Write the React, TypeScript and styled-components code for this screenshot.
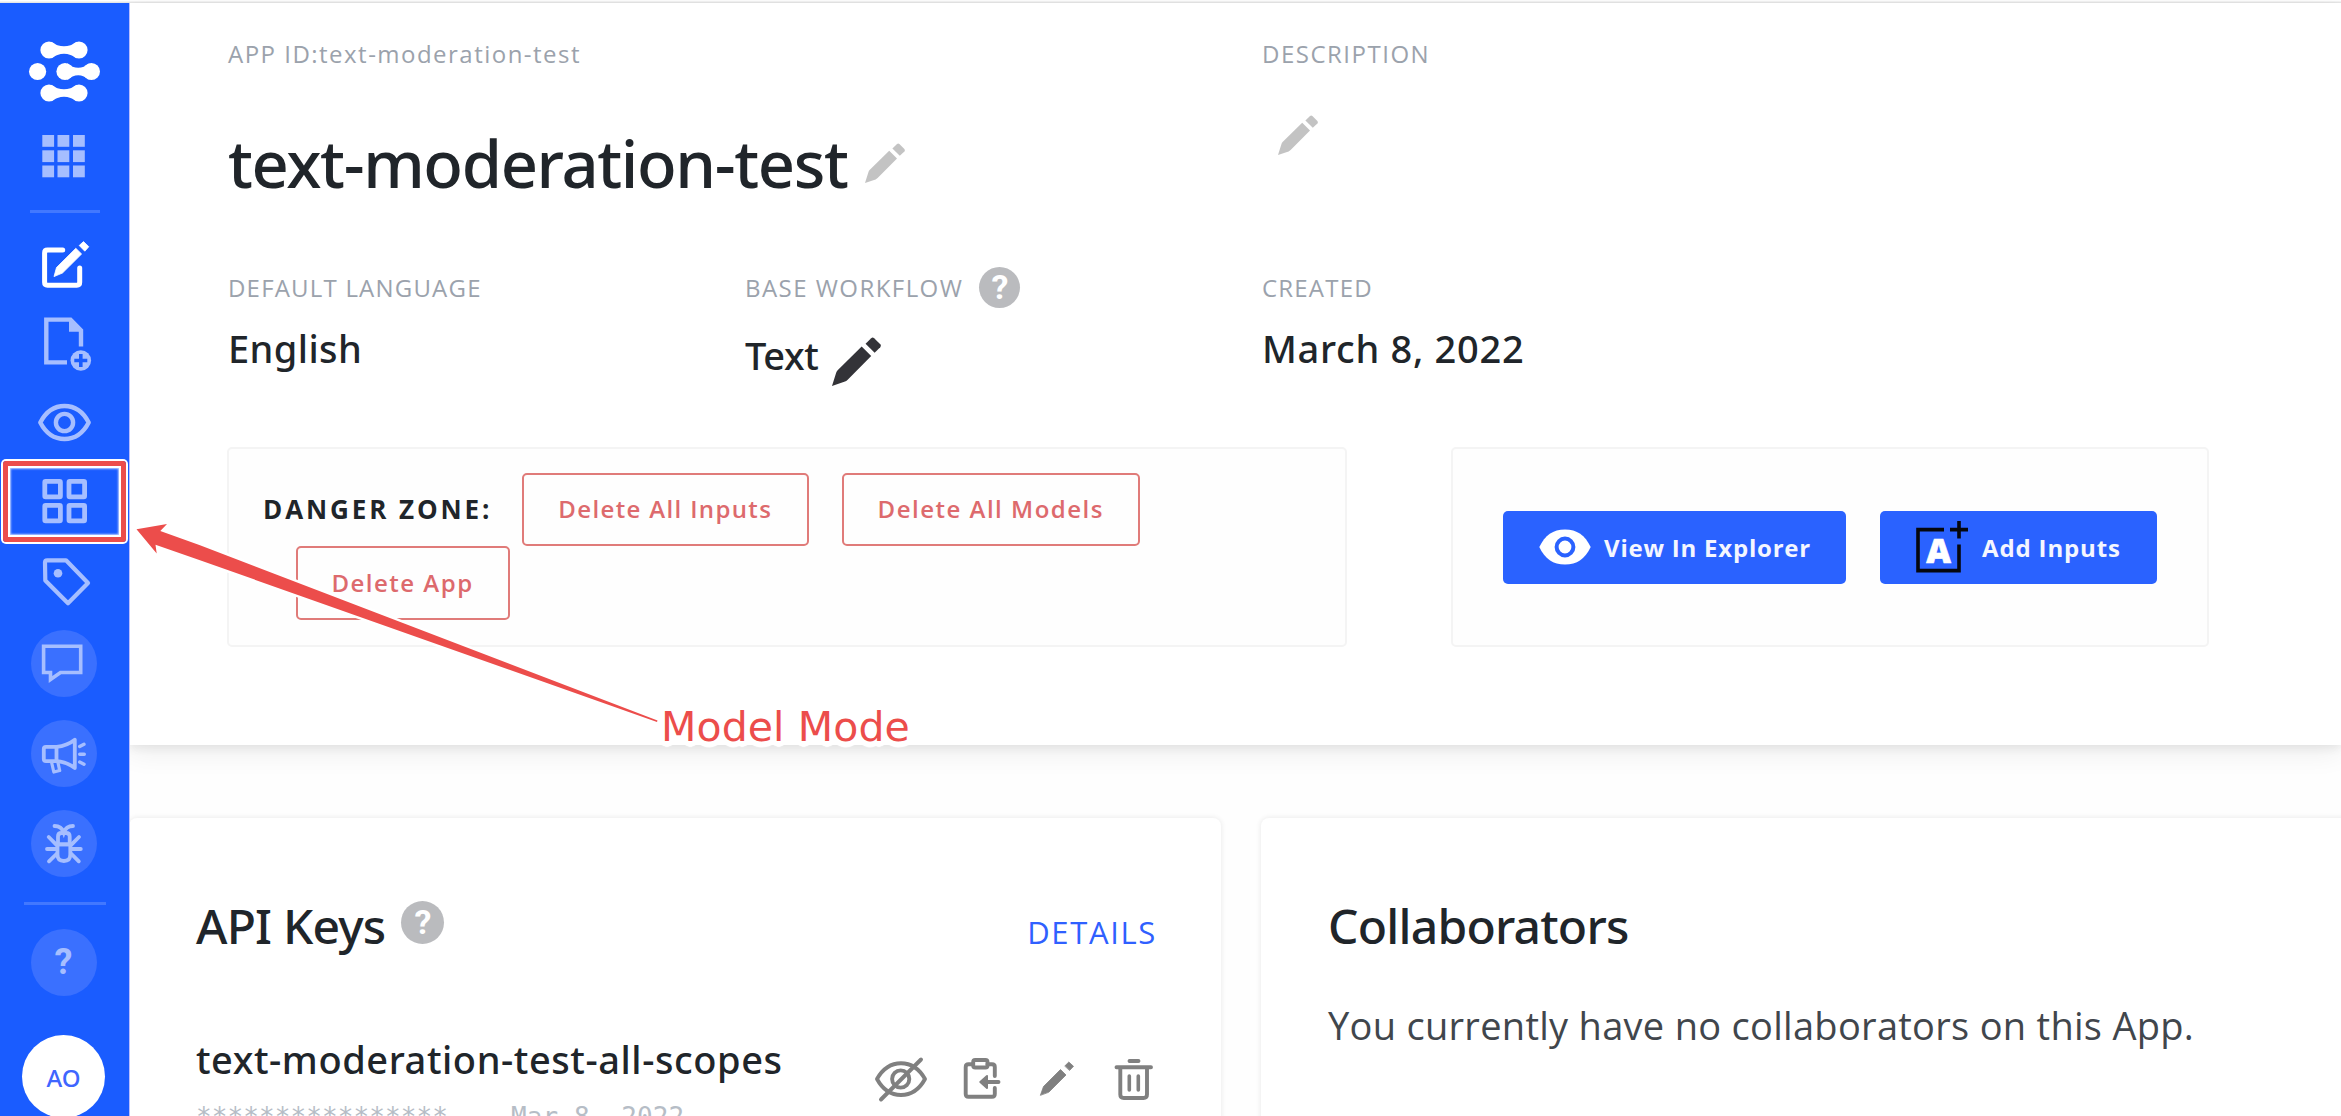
import React from "react";
import styled, { createGlobalStyle } from "styled-components";

const sans = `"Open Sans", "Noto Sans", sans-serif`;
const medium = `"Noto Sans", "Open Sans", sans-serif`;
const RED = "#ec4d4b";
const PALE = "#a6beff";

const GlobalStyle = createGlobalStyle`
  * { box-sizing: border-box; }
  html, body { margin: 0; padding: 0; background: #fefefe; overflow: hidden; }
  body { font-family: ${sans}; color: #20252a; }
  svg { display: block; flex: none; overflow: visible; }
`;

const Page = styled.div`
  position: relative;
  display: flex;
  flex-direction: column;
  width: 2341px;
  height: 1116px;
  overflow: hidden;
`;

const TopLine = styled.div`
  flex: none;
  height: 3px;
  margin-top: 1px;
  background: #e6e6e6;
  border-top: 1px solid #f3f3f3;
`;

const Body = styled.div`
  display: flex;
  flex: none;
  height: 1113px;
  margin-top: -1px;
`;

/* ---------- sidebar ---------- */

const Sidebar = styled.nav`
  position: relative;
  z-index: 3;
  flex: none;
  display: flex;
  flex-direction: column;
  align-items: center;
  width: 129px;
  height: 1113px;
  background: #1a5cff;
  box-shadow: 1px 0 0 #b9bdff;
  overflow: visible;
`;

const NavItem = styled.a<{ $gap: number }>`
  flex: none;
  display: block;
  margin-top: ${(p) => p.$gap}px;
`;

const Divider = styled.hr<{ $gap: number; $width: number }>`
  flex: none;
  width: ${(p) => p.$width}px;
  height: 3px;
  margin: ${(p) => p.$gap}px 0 0;
  border: 0;
  background: #4278ff;
`;

const Selected = styled.a`
  flex: none;
  display: flex;
  align-items: center;
  justify-content: center;
  width: 123px;
  height: 81px;
  margin-top: 17px;
  border: 5px solid ${RED};
  border-radius: 3px;
  box-shadow: 0 0 0 2px #fff, inset 0 0 0 2px #fff, inset 0 0 2px 3px rgba(255, 255, 255, 0.7);
`;

const Round = styled.a<{ $gap: number }>`
  flex: none;
  display: flex;
  align-items: center;
  justify-content: center;
  width: 66px;
  height: 67px;
  margin: ${(p) => p.$gap}px 2px 0 0;
  border-radius: 50%;
  background: #3a70ff;
  color: ${PALE};
  font: 700 36px/67px Roboto, ${sans};
`;

const Avatar = styled.a`
  flex: none;
  width: 83px;
  height: 83px;
  margin: 39px 2px 0 0;
  border-radius: 50%;
  background: #fff;
  color: #3f66ff;
  text-align: center;
  font: 500 24px/85px ${medium};
`;

function NavIcon({ y, h, children }: { y: number; h: number; children: React.ReactNode }) {
  return (
    <svg width="81" height={h} viewBox={`24 ${y} 81 ${h}`} fill="none" stroke={PALE} strokeWidth="4">
      {children}
    </svg>
  );
}

function Bone({ x1, x2, y }: { x1: number; x2: number; y: number }) {
  const m = (x1 + x2) / 2;
  return (
    <g>
      <circle cx={x1} cy={y} r="8.6" />
      <circle cx={x2} cy={y} r="8.6" />
      <path
        d={`M${x1 + 2} ${y - 8.3} Q${m} ${y + 1} ${x2 - 2} ${y - 8.3} V${y + 8.3} Q${m} ${y - 1} ${x1 + 2} ${y + 8.3} Z`}
      />
    </g>
  );
}

function SideNav() {
  return (
    <Sidebar>
      <NavItem $gap={37}>
        <NavIcon y={40} h={63}>
          <g fill="#fff" stroke="none">
            <Bone x1={49} x2={79} y={50} />
            <circle cx="37.6" cy="71.5" r="8.6" />
            <Bone x1={65} x2={91.4} y={71.5} />
            <Bone x1={49} x2={79} y={93} />
          </g>
        </NavIcon>
      </NavItem>
      <NavItem $gap={31}>
        <NavIcon y={134} h={44}>
          <g fill={PALE} stroke="none">
            {[135, 150.3, 165.5].map((y) =>
              [42.3, 57.5, 73].map((x) => <rect key={`${x}-${y}`} x={x} y={y} width="11.8" height="11.8" />)
            )}
          </g>
        </NavIcon>
      </NavItem>
      <Divider $gap={32} $width={70} />
      <NavItem $gap={27}>
        <NavIcon y={240} h={49}>
          <path
            d="M62.7 250.1 H47.5 Q44.6 250.1 44.6 253 V282.3 Q44.6 285.2 47.5 285.2 H76.8 Q79.7 285.2 79.7 282.3 V268"
            stroke="#fff"
            strokeWidth="5"
            strokeLinecap="round"
          />
          <path d="M54 276.6 L56.5 267.5 L75.8 248.3 L81.6 254 L62.5 273 Z" fill="#fff" stroke="#fff" strokeWidth="0.8" strokeLinejoin="round" />
          <path d="M79.2 245.5 L83.5 241.6 L88.8 246.7 L84.8 251.2 Z" fill="#fff" stroke="#fff" strokeWidth="0.8" strokeLinejoin="round" />
        </NavIcon>
      </NavItem>
      <NavItem $gap={26}>
        <NavIcon y={315} h={57}>
          <path d="M67 362.4 H46.3 V319.6 H70.5 L81 330.5 V346.5" strokeWidth="4.4" />
          <path d="M69 318 V331.7 H83 Z" fill={PALE} stroke="none" />
          <circle cx="80.8" cy="360.5" r="10.3" fill={PALE} stroke="none" />
          <path d="M80.8 354 V367 M74.3 360.5 H87.3" stroke="#1a5cff" strokeWidth="3.6" />
        </NavIcon>
      </NavItem>
      <NavItem $gap={30}>
        <NavIcon y={402} h={42}>
          <path
            d="M40.3 422.5 C46 411.5 54 406 64.5 406 S83 411.5 88.7 422.5 C83 433.5 75 439 64.5 439 S46 433.5 40.3 422.5 Z"
            strokeWidth="4.4"
            strokeLinejoin="round"
          />
          <circle cx="64.5" cy="422.5" r="8.6" strokeWidth="4.4" />
        </NavIcon>
      </NavItem>
      <Selected>
        <NavIcon y={479} h={44.5}>
          <g strokeWidth="4.8">
            {[481.4, 505.4].map((y) =>
              [44.8, 69].map((x) => <rect key={`${x}-${y}`} x={x} y={y} width="15.6" height="15.4" rx="0.8" />)
            )}
          </g>
        </NavIcon>
      </Selected>
      <NavItem $gap={14}>
        <NavIcon y={556} h={52}>
          <path d="M45 562.5 Q45 560.3 47.2 560.3 H66 L88 583 L68 603.3 L45.3 580.5 Z" strokeWidth="4.2" strokeLinejoin="round" />
          <circle cx="58" cy="573.3" r="4.3" fill={PALE} stroke="none" />
        </NavIcon>
      </NavItem>
      <Round $gap={22}>
        <svg width="66" height="67" viewBox="31 630 66 67" fill="none" stroke={PALE} strokeWidth="3.6">
          <path d="M43.6 646.3 H80.7 V672.5 H60.5 L50.5 679.5 V672.5 H43.6 Z" />
        </svg>
      </Round>
      <Round $gap={23}>
        <svg width="66" height="67" viewBox="31 720 66 67" fill="none" stroke={PALE} strokeWidth="3.8" strokeLinejoin="round" strokeLinecap="round">
          <path d="M56.5 746.8 H46 Q43.8 746.8 43.8 749 V759 Q43.8 761.2 46 761.2 H56.5 Z" />
          <path d="M56.5 746.8 Q67 746 74.8 739.8 V768 Q67 762 56.5 761.2" />
          <path d="M51.5 762 L53.8 772 L59.7 770.5 L57.8 762" strokeWidth="3.2" />
          <path d="M79.7 746.5 L84 744.3 M79.7 754.3 H84.3 M79.7 762 L84 764.3" strokeWidth="3.4" />
        </svg>
      </Round>
      <Round $gap={23}>
        <svg width="66" height="67" viewBox="31 810 66 67" fill="none" stroke={PALE} strokeWidth="3.8" strokeLinecap="round">
          <path d="M54.5 826 Q61.5 826 63.8 832.5 Q66 826 73 826" />
          <path d="M58 844.3 V836.5 Q58 833 61.5 833 H66 Q69.7 833 69.7 836.5 V844.3 Z" />
          <path d="M57.5 844.3 H70.3 V854.5 Q70.3 861 63.9 861 T57.5 854.5 Z" />
          <path d="M48.7 837 L56.5 844.8 M79 837 L71.2 844.8 M47 849 H56 M72 849 H80.8 M49 861.3 L57 853.5 M78.8 861.3 L71 853.5" />
        </svg>
      </Round>
      <Divider $gap={25} $width={82} />
      <Round $gap={24}>?</Round>
      <Avatar>AO</Avatar>
    </Sidebar>
  );
}

/* ---------- shared pieces ---------- */

const HelpDot = styled.span<{ $size: number }>`
  flex: none;
  width: ${(p) => p.$size}px;
  height: ${(p) => p.$size}px;
  border-radius: 50%;
  background: #babbbe;
  color: #fff;
  text-align: center;
  letter-spacing: 0;
  font: 700 34px/${(p) => p.$size}px Roboto, ${sans};
`;

function Pencil({ size, color }: { size: number; color: string }) {
  return (
    <svg width={size} height={size} viewBox="0 0 40 40" fill={color}>
      <path d="M0 40 L3.4 29.2 Q3.7 28 4.6 27.1 L24.2 7.8 L32 15.6 L12.6 35 Q11.6 36 10.6 36.4 Z" />
      <path d="M27.4 5.6 L32 1 Q33.2 0 34.4 1 L39.4 5.9 Q40.5 7.2 39.4 8.4 L34.8 12.8 Z" />
    </svg>
  );
}

/* ---------- header panel ---------- */

const Main = styled.main`
  flex: 1;
  min-width: 0;
`;

const Header = styled.section`
  position: relative;
  z-index: 1;
  height: 742px;
  padding: 34px 0 0 99px;
  background: #fff;
  box-shadow: 0 4px 8px rgba(0, 0, 0, 0.06), 0 8px 26px rgba(0, 0, 0, 0.07);
`;

const Row = styled.div<{ $columns: string; $height: number }>`
  display: grid;
  grid-template-columns: ${(p) => p.$columns};
  height: ${(p) => p.$height}px;
`;

const Label = styled.div<{ $height?: number; $track?: number }>`
  display: flex;
  align-items: center;
  gap: 16px;
  height: ${(p) => p.$height ?? 32}px;
  color: #9ba2ac;
  font-size: 24px;
  letter-spacing: ${(p) => p.$track ?? 1.4}px;
  white-space: nowrap;
`;

const TitleLine = styled.div`
  display: flex;
  align-items: center;
  gap: 17px;
  height: 80px;
  margin-top: 54px;
`;

const Title = styled.h1`
  margin: 0;
  font-family: ${medium};
  font-size: 65px;
  line-height: 80px;
  font-weight: 500;
  letter-spacing: -1.36px;
  white-space: nowrap;
`;

const DescriptionEdit = styled.div`
  margin: 46px 0 0 16px;
`;

const Value = styled.div<{ $gap?: number; $track: number }>`
  display: flex;
  margin-top: ${(p) => p.$gap ?? 15}px;
  font-family: ${medium};
  font-size: 38px;
  line-height: 50px;
  font-weight: 500;
  letter-spacing: ${(p) => p.$track}px;
  white-space: nowrap;
`;

const ValueEdit = styled.span`
  margin: 7px 0 0 14px;
`;

const Boxes = styled.div`
  display: flex;
  gap: 104px;
  margin-left: -1px;
`;

const Box = styled.div<{ $width: number }>`
  flex: none;
  display: flex;
  flex-wrap: wrap;
  width: ${(p) => p.$width}px;
  height: 200px;
  border: 2px solid #f4f4f4;
  border-radius: 5px;
  background: #fefefe;
`;

const DangerBox = styled(Box)`
  align-content: flex-start;
  padding: 23.5px 0 0 33px;
`;

const ActionBox = styled(Box)`
  align-items: center;
  gap: 34px;
  padding-left: 50px;
`;

const DangerLabel = styled.div`
  width: 226.5px;
  line-height: 73px;
  text-indent: 1px;
  font-size: 26px;
  font-weight: 700;
  letter-spacing: 2.9px;
  white-space: nowrap;
`;

const DangerButton = styled.button<{ $width: number; $track: number }>`
  width: ${(p) => p.$width}px;
  height: 73.5px;
  margin: 0 0 0 33.5px;
  padding: 0;
  border: 2px solid #e07b79;
  border-radius: 5px;
  background: transparent;
  color: #dd6a6d;
  font: 600 24px/64px ${sans};
  letter-spacing: ${(p) => p.$track}px;
  white-space: nowrap;
`;

const PrimaryButton = styled.button<{ $width: number; $gap: number; $track: number }>`
  display: flex;
  align-items: center;
  gap: ${(p) => p.$gap}px;
  width: ${(p) => p.$width}px;
  height: 73px;
  padding: 0 0 0 36px;
  border: 0;
  border-radius: 5px;
  background: #2a62ff;
  color: #f4f6ff;
  font: 700 24px/73px ${sans};
  letter-spacing: ${(p) => p.$track}px;
  white-space: nowrap;
`;

function AppHeader() {
  return (
    <Header>
      <Row $columns="1034px 1fr" $height={230}>
        <div>
          <Label $track={1.48}>APP ID:text-moderation-test</Label>
          <TitleLine>
            <Title>text-moderation-test</Title>
            <Pencil size={40} color="#c3c3c3" />
          </TitleLine>
        </div>
        <div>
          <Label $track={1.5}>DESCRIPTION</Label>
          <DescriptionEdit>
            <Pencil size={40} color="#c3c3c3" />
          </DescriptionEdit>
        </div>
      </Row>
      <Row $columns="517px 517px 1fr" $height={180}>
        <div>
          <Label $height={41} $track={1.2}>DEFAULT LANGUAGE</Label>
          <Value $track={0.41}>English</Value>
        </div>
        <div>
          <Label $height={41} $track={1.45}>
            BASE WORKFLOW
            <HelpDot $size={41}>?</HelpDot>
          </Label>
          <Value $gap={22} $track={-0.4}>
            Text
            <ValueEdit>
              <Pencil size={49} color="#333338" />
            </ValueEdit>
          </Value>
        </div>
        <div>
          <Label $height={41} $track={1.2}>CREATED</Label>
          <Value $track={0.7}>March 8, 2022</Value>
        </div>
      </Row>
      <Boxes>
        <DangerBox $width={1120}>
          <DangerLabel>DANGER ZONE:</DangerLabel>
          <DangerButton $width={286.5} $track={1.35}>Delete All Inputs</DangerButton>
          <DangerButton $width={297.5} $track={1.5}>Delete All Models</DangerButton>
          <DangerButton $width={214} $track={1.5}>Delete App</DangerButton>
        </DangerBox>
        <ActionBox $width={758}>
          <PrimaryButton $width={343} $gap={13} $track={0.78}>
            <svg width="52" height="36" viewBox="0 0 52 36">
              <path d="M0.3 18 C6 6 14 0.4 26 0.4 S46 6 51.7 18 C46 30 38 35.6 26 35.6 S6 30 0.3 18 Z" fill="#fff" />
              <circle cx="26" cy="18" r="8.4" fill="none" stroke="#2a62ff" strokeWidth="4" />
            </svg>
            View In Explorer
          </PrimaryButton>
          <PrimaryButton $width={277} $gap={14} $track={0.86}>
            <svg width="52" height="52" viewBox="0 0 52 52" fill="none" stroke="#05070d" strokeWidth="3.6">
              <path d="M28 8.6 H2 V49.6 H43 V23.5 M43 0 V17.5 M34 8.6 H52" />
              <text x="22.5" y="41.5" textAnchor="middle" fontFamily={sans} fontSize="34" fontWeight="800" fill="#fff" stroke="#fff" strokeWidth="0.6" letterSpacing="0">
                A
              </text>
            </svg>
            Add Inputs
          </PrimaryButton>
        </ActionBox>
      </Boxes>
    </Header>
  );
}

/* ---------- cards ---------- */

const Cards = styled.div`
  display: flex;
  gap: 40px;
  margin-top: 73px;
`;

const Card = styled.section`
  flex: none;
  width: 1092px;
  height: 420px;
  padding: 78px 67px 0;
  border-radius: 8px;
  background: #fff;
  box-shadow: 0 0 5px 1px rgba(0, 0, 0, 0.07);
`;

const CardHead = styled.div`
  display: flex;
  align-items: flex-start;
  height: 60px;
`;

const CardTitle = styled.h2<{ $track: number }>`
  margin: 0;
  font-family: ${medium};
  font-size: 48px;
  line-height: 60px;
  font-weight: 500;
  letter-spacing: ${(p) => p.$track}px;
  white-space: nowrap;
`;

const CardHelp = styled.div`
  display: flex;
  margin: 5px 0 0 16px;
`;

const DetailsLink = styled.a`
  margin: 0 -3px 0 auto;
  color: #2f60ff;
  font-size: 31px;
  line-height: 73px;
  letter-spacing: 1.65px;
`;

const KeyRow = styled.div`
  display: flex;
  justify-content: space-between;
  margin-top: 78px;
`;

const KeyName = styled.div`
  font-family: ${medium};
  font-size: 38px;
  line-height: 50px;
  font-weight: 500;
  letter-spacing: 0.57px;
  white-space: nowrap;
`;

const KeyMeta = styled.div`
  margin-top: 15px;
  color: #b6bdc6;
  font: 400 26px/36px "DejaVu Sans Mono", monospace;
  letter-spacing: 0.1px;
  white-space: pre;
`;

const KeyActions = styled.div`
  display: flex;
  align-items: flex-start;
  margin: 23px 1px 0 0;
`;

const KeyAction = styled.a<{ $gap?: number }>`
  margin-left: ${(p) => p.$gap ?? 0}px;
`;

const Note = styled.p`
  margin: 44px 0 0;
  color: #41464c;
  font-size: 38px;
  line-height: 50px;
  letter-spacing: 0.29px;
  white-space: nowrap;
`;

function ActionIcon({ x, w, children }: { x: number; w: number; children: React.ReactNode }) {
  return (
    <svg width={w} height="46" viewBox={`${x} 1057 ${w} 46`} fill="none" stroke="#808080" strokeWidth="3.9" strokeLinecap="round" strokeLinejoin="round">
      {children}
    </svg>
  );
}

function CardArea() {
  return (
    <Cards>
      <Card>
        <CardHead>
          <CardTitle $track={-0.8}>API Keys</CardTitle>
          <CardHelp>
            <HelpDot $size={43}>?</HelpDot>
          </CardHelp>
          <DetailsLink>DETAILS</DetailsLink>
        </CardHead>
        <KeyRow>
          <div>
            <KeyName>text-moderation-test-all-scopes</KeyName>
            <KeyMeta>{"****************    Mar 8, 2022"}</KeyMeta>
          </div>
          <KeyActions>
            <KeyAction>
              <ActionIcon x={875} w={52}>
                <path d="M877 1079 C883 1068.5 891 1063.3 901 1063.3 S919 1068.5 925 1079 C919 1090 911 1095 901 1095 S883 1090 877 1079 Z" />
                <circle cx="900.7" cy="1079" r="8.6" />
                <path d="M881 1099.5 L921 1059.5" />
              </ActionIcon>
            </KeyAction>
            <KeyAction $gap={37}>
              <ActionIcon x={964} w={36}>
                <path d="M973 1064.3 H968.5 Q965.7 1064.3 965.7 1067 V1094 Q965.7 1096.8 968.5 1096.8 H992 Q994.8 1096.8 994.8 1094 V1088 M987.5 1064.3 H992 Q994.8 1064.3 994.8 1067 V1076" />
                <rect x="973.2" y="1060" width="14.3" height="7.5" rx="2" />
                <path d="M986 1082 H998.5" />
                <path d="M980.3 1082 L987 1076 V1088 Z" fill="#808080" strokeWidth="2" />
              </ActionIcon>
            </KeyAction>
            <KeyAction $gap={40}>
              <ActionIcon x={1040} w={34}>
                <g fill="#808080" strokeWidth="0.8">
                  <path d="M1040.5 1095 L1043.5 1086.5 L1060.5 1069.5 L1066 1075 L1049 1092 Z" />
                  <path d="M1065 1065.8 L1068.8 1062 L1073.5 1066.3 L1069.8 1070.2 Z" />
                </g>
              </ActionIcon>
            </KeyAction>
            <KeyAction $gap={40}>
              <ActionIcon x={1114} w={39}>
                <path d="M1116.5 1067.3 H1151 M1129.5 1061 H1138.5" />
                <path d="M1120.3 1068 V1094.5 Q1120.3 1098 1123.8 1098 H1143.5 Q1147 1098 1147 1094.5 V1068" />
                <path d="M1129.3 1076 V1090 M1138.3 1076 V1090" strokeWidth="3.6" />
              </ActionIcon>
            </KeyAction>
          </KeyActions>
        </KeyRow>
      </Card>
      <Card>
        <CardHead>
          <CardTitle $track={-0.76}>Collaborators</CardTitle>
        </CardHead>
        <Note>You currently have no collaborators on this App.</Note>
      </Card>
    </Cards>
  );
}

/* ---------- callout drawn over the page ---------- */

const Arrow = styled.svg`
  position: absolute;
  z-index: 4;
  left: 0;
  top: 0;
  pointer-events: none;
`;

const halo = Array.from({ length: 24 }, (_, i) => {
  const a = (i / 24) * Math.PI * 2;
  return `${(Math.cos(a) * 5).toFixed(1)}px ${(Math.sin(a) * 5 + 0.5).toFixed(1)}px 1px #fff`;
}).join(", ");

const CalloutText = styled.div`
  position: absolute;
  z-index: 4;
  left: 661px;
  top: 699px;
  color: ${RED};
  font: 400 41px/56px "DejaVu Sans", sans-serif;
  letter-spacing: 0.1px;
  white-space: nowrap;
  text-shadow: ${halo};
`;

export default function App() {
  return (
    <Page>
      <GlobalStyle />
      <TopLine />
      <Body>
        <SideNav />
        <Main>
          <AppHeader />
          <CardArea />
        </Main>
      </Body>
      <CalloutText>Model Mode</CalloutText>
      <Arrow width="700" height="760" viewBox="0 0 700 760">
        <path
          d="M136.5 529.3 L167 524 L160.3 531 L200 545.3 L657.5 720.6 L657 722 L200 560.3 L155.5 544.8 L156.7 553.5 Z"
          fill={RED}
          stroke="#fff"
          strokeWidth="5"
          strokeLinejoin="round"
          paintOrder="stroke"
        />
      </Arrow>
    </Page>
  );
}
